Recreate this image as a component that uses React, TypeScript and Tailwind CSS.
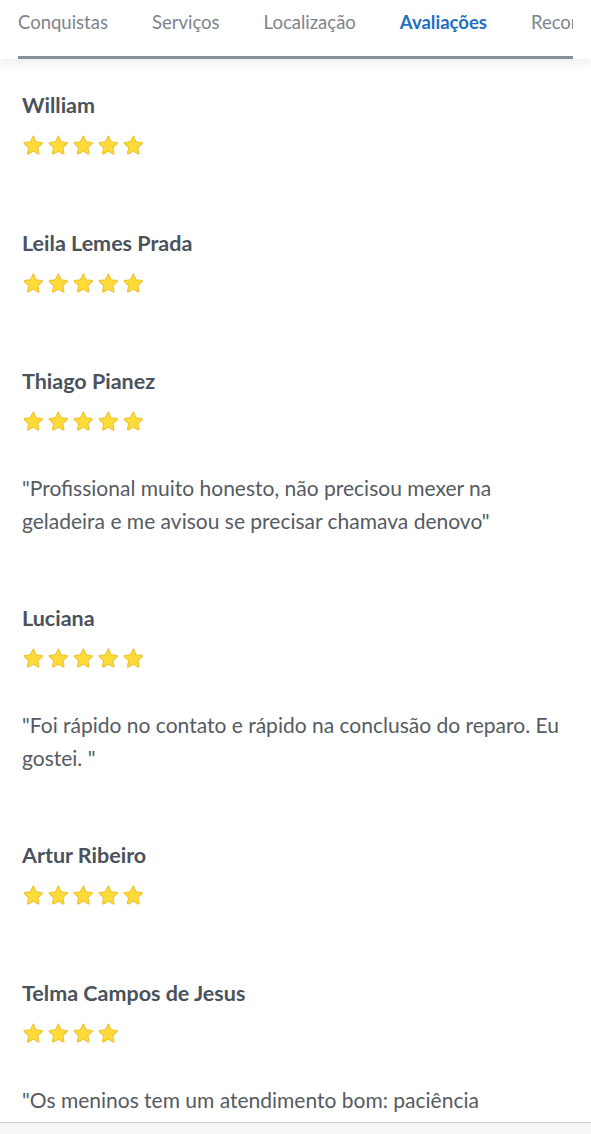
import React from "react";

type Review = {
  name: string;
  stars: number;
  comment?: string;
};

const tabs = ["Conquistas", "Serviços", "Localização", "Avaliações", "Recomendações"];

const reviews: Review[] = [
  { name: "William", stars: 5 },
  { name: "Leila Lemes Prada", stars: 5 },
  {
    name: "Thiago Pianez",
    stars: 5,
    comment:
      "\"Profissional muito honesto, não precisou mexer na geladeira e me avisou se precisar chamava denovo\"",
  },
  {
    name: "Luciana",
    stars: 5,
    comment: "\"Foi rápido no contato e rápido na conclusão do reparo. Eu gostei. \"",
  },
  { name: "Artur Ribeiro", stars: 5 },
  {
    name: "Telma Campos de Jesus",
    stars: 4,
    comment:
      "\"Os meninos tem um atendimento bom: paciência\ntambém disse isso porque esses consertos caixas usados dão trabalho e eles resolveram tudo rapidinho.\"",
  },
];

function Star() {
  return (
    <svg width="21" height="20" viewBox="0 0 24 23">
      <path
        d="M12 1.6l2.9 6.2 6.7.8c.6.1.8.8.4 1.2l-5 4.6 1.3 6.7c.1.6-.5 1-1 .7L12 18.5l-5.9 3.3c-.5.3-1.1-.2-1-.7l1.3-6.7-5-4.6c-.4-.4-.2-1.1.4-1.2l6.7-.8 2.9-6.2c.2-.5 1-.5 1.2 0z"
        fill="#ffdb3a"
        stroke="#ecc02c"
        strokeWidth="1.2"
        strokeLinejoin="round"
      />
    </svg>
  );
}

export default function App() {
  const activeTab = "Avaliações";

  return (
    <div className="min-h-screen bg-white" style={{ fontFamily: "Lato, 'Noto Sans', sans-serif" }}>
      {/* Tabs */}
      <div className="sticky top-0 z-10 bg-white shadow-[0_6px_10px_rgba(0,0,0,0.06)]">
        <div className="mx-[18px] flex h-[59px] overflow-hidden border-b-[3px] border-[#8a9097]">
          {tabs.map((tab) => (
            <div
              key={tab}
              className={
                tab === activeTab
                  ? "-mb-[3px] shrink-0 border-b-[3px] border-[#1f74cc] px-[22px] pt-[9px] text-[18.5px] font-bold text-[#1f6fc2]"
                  : "shrink-0 px-[22px] pt-[9px] text-[18.5px] text-[#7d848c] first:pl-0"
              }
            >
              {tab}
            </div>
          ))}
        </div>
      </div>

      {/* Reviews */}
      <div className="px-[22px] pt-[32px]">
        {reviews.map((r) => (
          <div key={r.name} className="pb-[34px]">
            <div className="text-[21.5px] font-bold leading-[28px] text-[#4a525c]">{r.name}</div>
            <div className="mb-[40px] mt-[16px] flex gap-[4px] pl-[1px]">
              {Array.from({ length: r.stars }).map((_, i) => (
                <Star key={i} />
              ))}
            </div>
            {r.comment && (
              <p className="mb-[33px] whitespace-pre-line text-[21px] leading-[33px] text-[#555b62]">
                {r.comment}
              </p>
            )}
          </div>
        ))}
      </div>

      {/* bottom bar */}
      <div className="fixed bottom-0 left-0 right-0 h-[12px] border-t border-[#c9cdd1] bg-[#f7f7f7]" />
    </div>
  );
}
